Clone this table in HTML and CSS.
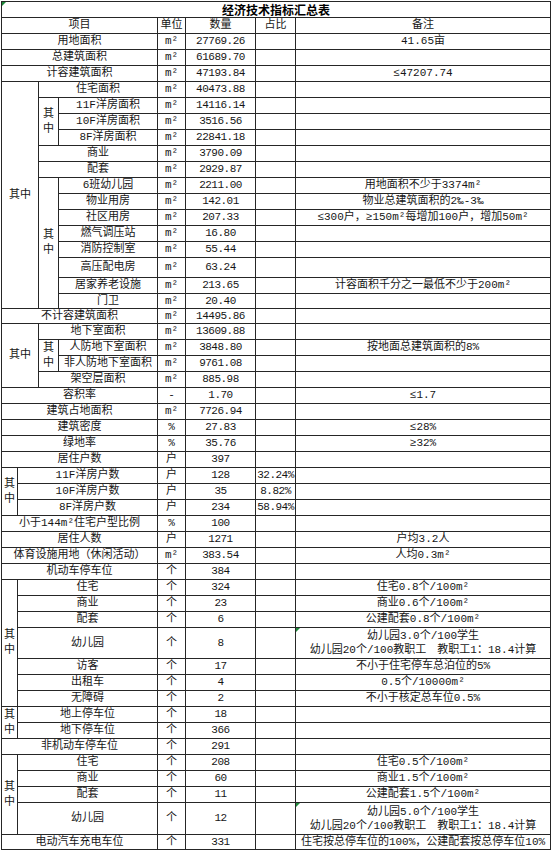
FILE: index.html
```html
<!DOCTYPE html>
<html lang="zh-CN">
<head>
<meta charset="utf-8">
<title>经济技术指标汇总表</title>
<link rel="stylesheet" href="styles.css">
</head>
<body>
<table class="sheet">
<colgroup>
<col class="c-a"><col class="c-b"><col class="c-c"><col class="c-d"><col class="c-e"><col class="c-f"><col class="c-g"><col class="c-h">
</colgroup>
<tr><td colspan="8" class="title mark">经济技术指标汇总表</td></tr>
<tr><td colspan="4">项目</td><td>单位</td><td>数量</td><td>占比</td><td>备注</td></tr>
<tr><td colspan="4">用地面积</td><td>m²</td><td class="n">27769.26</td><td></td><td>41.65亩</td></tr>
<tr><td colspan="4">总建筑面积</td><td>m²</td><td class="n">61689.70</td><td></td><td></td></tr>
<tr><td colspan="4">计容建筑面积</td><td>m²</td><td class="n">47193.84</td><td></td><td>≤47207.74</td></tr>
<tr><td colspan="2" rowspan="14">其中</td><td colspan="2">住宅面积</td><td>m²</td><td class="n">40473.88</td><td></td><td></td></tr>
<tr><td rowspan="3" class="v">其<br>中</td><td>11F洋房面积</td><td>m²</td><td class="n">14116.14</td><td></td><td></td></tr>
<tr><td>10F洋房面积</td><td>m²</td><td class="n">3516.56</td><td></td><td></td></tr>
<tr><td>8F洋房面积</td><td>m²</td><td class="n">22841.18</td><td></td><td></td></tr>
<tr><td colspan="2">商业</td><td>m²</td><td class="n">3790.09</td><td></td><td></td></tr>
<tr><td colspan="2">配套</td><td>m²</td><td class="n">2929.87</td><td></td><td></td></tr>
<tr><td rowspan="8" class="v">其<br>中</td><td>6班幼儿园</td><td>m²</td><td class="n">2211.00</td><td></td><td>用地面积不少于3374m²</td></tr>
<tr><td>物业用房</td><td>m²</td><td class="n">142.01</td><td></td><td>物业总建筑面积的2‰-3‰</td></tr>
<tr><td>社区用房</td><td>m²</td><td class="n">207.33</td><td></td><td>≤300户，≥150m²每增加100户，增加50m²</td></tr>
<tr><td>燃气调压站</td><td>m²</td><td class="n">16.80</td><td></td><td></td></tr>
<tr><td>消防控制室</td><td>m²</td><td class="n">55.44</td><td></td><td></td></tr>
<tr class="h20"><td>高压配电房</td><td>m²</td><td class="n">63.24</td><td></td><td></td></tr>
<tr><td>居家养老设施</td><td>m²</td><td class="n">213.65</td><td></td><td>计容面积千分之一最低不少于200m²</td></tr>
<tr class="h15"><td>门卫</td><td>m²</td><td class="n">20.40</td><td></td><td></td></tr>
<tr class="h15"><td colspan="4">不计容建筑面积</td><td>m²</td><td class="n">14495.86</td><td></td><td></td></tr>
<tr><td colspan="2" rowspan="4">其中</td><td colspan="2">地下室面积</td><td>m²</td><td class="n">13609.88</td><td></td><td></td></tr>
<tr><td rowspan="2" class="v">其<br>中</td><td>人防地下室面积</td><td>m²</td><td class="n">3848.80</td><td></td><td>按地面总建筑面积的8%</td></tr>
<tr><td>非人防地下室面积</td><td>m²</td><td class="n">9761.08</td><td></td><td></td></tr>
<tr><td colspan="2">架空层面积</td><td>m²</td><td class="n">885.98</td><td></td><td></td></tr>
<tr><td colspan="4">容积率</td><td>-</td><td class="n">1.70</td><td></td><td>≤1.7</td></tr>
<tr><td colspan="4">建筑占地面积</td><td>m²</td><td class="n">7726.94</td><td></td><td></td></tr>
<tr><td colspan="4">建筑密度</td><td>%</td><td class="n">27.83</td><td></td><td>≤28%</td></tr>
<tr><td colspan="4">绿地率</td><td>%</td><td class="n">35.76</td><td></td><td>≥32%</td></tr>
<tr><td colspan="4">居住户数</td><td>户</td><td class="n">397</td><td></td><td></td></tr>
<tr><td rowspan="3" class="v">其<br>中</td><td colspan="3">11F洋房户数</td><td>户</td><td class="n">128</td><td class="n">32.24%</td><td></td></tr>
<tr><td colspan="3">10F洋房户数</td><td>户</td><td class="n">35</td><td class="n">8.82%</td><td></td></tr>
<tr><td colspan="3">8F洋房户数</td><td>户</td><td class="n">234</td><td class="n">58.94%</td><td></td></tr>
<tr><td colspan="4">小于144m²住宅户型比例</td><td>%</td><td class="n">100</td><td></td><td></td></tr>
<tr><td colspan="4">居住人数</td><td>户</td><td class="n">1271</td><td></td><td>户均3.2人</td></tr>
<tr><td colspan="4">体育设施用地（休闲活动）</td><td>m²</td><td class="n">383.54</td><td></td><td>人均0.3m²</td></tr>
<tr><td colspan="4">机动车停车位</td><td>个</td><td class="n">384</td><td></td><td></td></tr>
<tr><td rowspan="7" class="v">其<br>中</td><td colspan="3">住宅</td><td>个</td><td class="n">324</td><td></td><td>住宅0.8个/100m²</td></tr>
<tr><td colspan="3">商业</td><td>个</td><td class="n">23</td><td></td><td>商业0.6个/100m²</td></tr>
<tr><td colspan="3">配套</td><td>个</td><td class="n">6</td><td></td><td>公建配套0.8个/100m²</td></tr>
<tr class="h31"><td colspan="3">幼儿园</td><td>个</td><td class="n">8</td><td></td><td class="two mark">幼儿园3.0个/100学生<br>幼儿园20个/100教职工　教职工1：18.4计算</td></tr>
<tr><td colspan="3">访客</td><td>个</td><td class="n">17</td><td></td><td>不小于住宅停车总泊位的5%</td></tr>
<tr><td colspan="3">出租车</td><td>个</td><td class="n">4</td><td></td><td>0.5个/10000m²</td></tr>
<tr><td colspan="3">无障碍</td><td>个</td><td class="n">2</td><td></td><td>不小于核定总车位0.5%</td></tr>
<tr><td rowspan="2" class="v">其<br>中</td><td colspan="3">地上停车位</td><td>个</td><td class="n">18</td><td></td><td></td></tr>
<tr><td colspan="3">地下停车位</td><td>个</td><td class="n">366</td><td></td><td></td></tr>
<tr><td colspan="4">非机动车停车位</td><td>个</td><td class="n">291</td><td></td><td></td></tr>
<tr><td rowspan="4" class="v">其<br>中</td><td colspan="3">住宅</td><td>个</td><td class="n">208</td><td></td><td>住宅0.5个/100m²</td></tr>
<tr><td colspan="3">商业</td><td>个</td><td class="n">60</td><td></td><td>商业1.5个/100m²</td></tr>
<tr><td colspan="3">配套</td><td>个</td><td class="n">11</td><td></td><td>公建配套1.5个/100m²</td></tr>
<tr class="h32"><td colspan="3">幼儿园</td><td>个</td><td class="n">12</td><td></td><td class="two mark">幼儿园5.0个/100学生<br>幼儿园20个/100教职工　教职工1：18.4计算</td></tr>
<tr class="h15"><td colspan="4">电动汽车充电车位</td><td>个</td><td class="n">331</td><td></td><td>住宅按总停车位的100%，公建配套按总停车位10%</td></tr>
</table>
</body>
</html>
```

FILE: styles.css
```css
html, body {
  margin: 0;
  background: #ffffff;
}

.sheet {
  border-collapse: collapse;
  table-layout: fixed;
  width: 550px;
  margin: 1px 0 0 1px;
  font-family: "Liberation Mono", "Noto Sans CJK SC", monospace;
  font-size: 11px;
  color: #161616;
}

.c-a { width: 16px; }
.c-b { width: 21px; }
.c-c { width: 20px; }
.c-d { width: 99px; }
.c-e { width: 28px; }
.c-f { width: 70px; }
.c-g { width: 40px; }

.sheet tr { height: 16px; }
.sheet tr.h15 { height: 15px; }
.sheet tr.h20 { height: 20px; }
.sheet tr.h31 { height: 31px; }
.sheet tr.h32 { height: 32px; }

.sheet td {
  border: 1px solid #262626;
  padding: 0;
  text-align: center;
  vertical-align: middle;
  line-height: 13px;
  white-space: nowrap;
  overflow: hidden;
}

.sheet td.title {
  font-family: "Noto Sans CJK SC", sans-serif;
  font-weight: bold;
  font-size: 12px;
  color: #000;
}

.sheet td.n {
  letter-spacing: -0.5px;
}

.sheet td.v {
  line-height: 15px;
}

.sheet td.two {
  line-height: 14px;
}

.sheet td.mark {
  position: relative;
}

.sheet td.mark::before {
  content: "";
  position: absolute;
  left: 0;
  top: 0;
  border-top: 4px solid #1d8a3a;
  border-right: 4px solid transparent;
}
```
